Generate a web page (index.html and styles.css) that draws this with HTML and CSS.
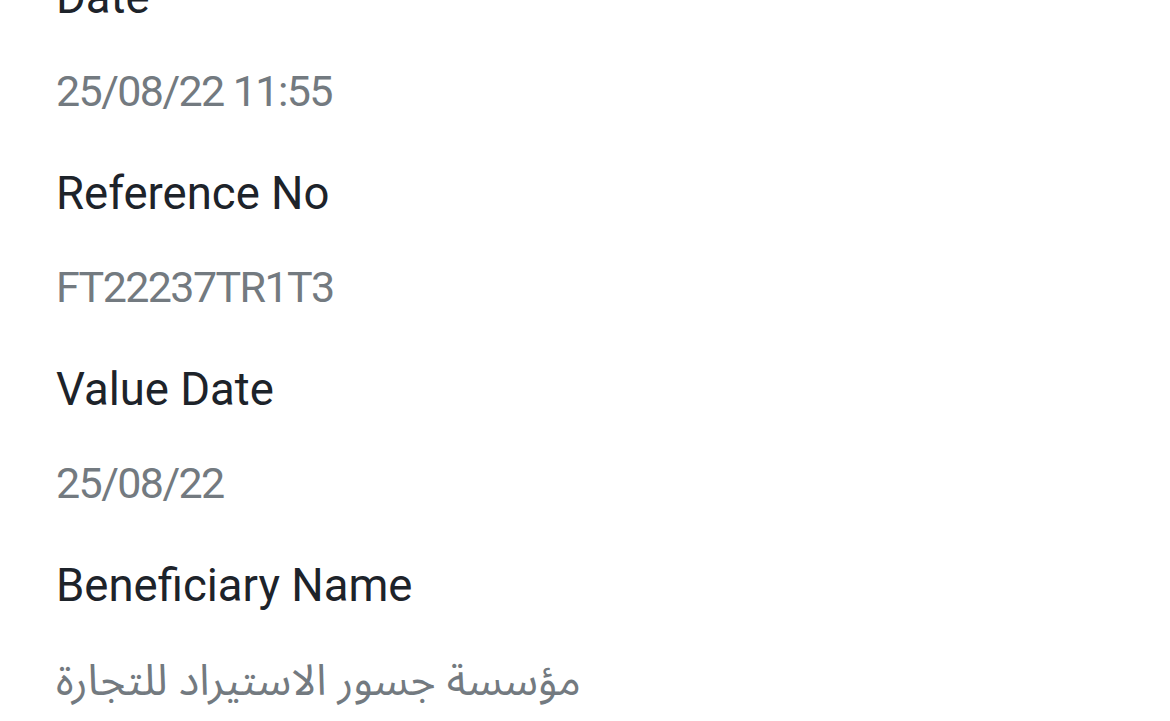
FILE: index.html
```html
<!DOCTYPE html>
<html lang="en">
<head>
<meta charset="utf-8">
<title>Transaction details</title>
<link rel="stylesheet" href="styles.css">
</head>
<body>
<main class="details">
  <section class="item">
    <div class="label">Date</div>
    <div class="value">25/08/22 11:55</div>
  </section>
  <section class="item">
    <div class="label">Reference No</div>
    <div class="value">FT22237TR1T3</div>
  </section>
  <section class="item">
    <div class="label">Value Date</div>
    <div class="value">25/08/22</div>
  </section>
  <section class="item">
    <div class="label">Beneficiary Name</div>
    <div class="value value-ar" dir="rtl">مؤسسة جسور الاستيراد للتجارة</div>
  </section>
</main>
</body>
</html>
```
FILE: styles.css
```css
html, body {
  margin: 0;
  padding: 0;
  background: #ffffff;
  overflow: hidden;
}
.details {
  display: flex;
  flex-direction: column;
  padding-left: 56px;
  margin-top: -32px;
  font-family: Roboto, "Noto Sans", "DejaVu Sans", sans-serif;
}
.item {
  display: flex;
  flex-direction: column;
  align-items: flex-start;
  margin-bottom: 43px;
}
.label {
  font-size: 45.5px;
  line-height: 60px;
  color: #1d232a;
  margin-bottom: 33px;
}
.value {
  font-size: 43px;
  line-height: 60px;
  color: #737a80;
  letter-spacing: -1.6px;
}
.value-ar {
  letter-spacing: 0;
  font-family: "Noto Sans Arabic", "Noto Sans", "DejaVu Sans", sans-serif;
  margin-top: 3px;
}
```
